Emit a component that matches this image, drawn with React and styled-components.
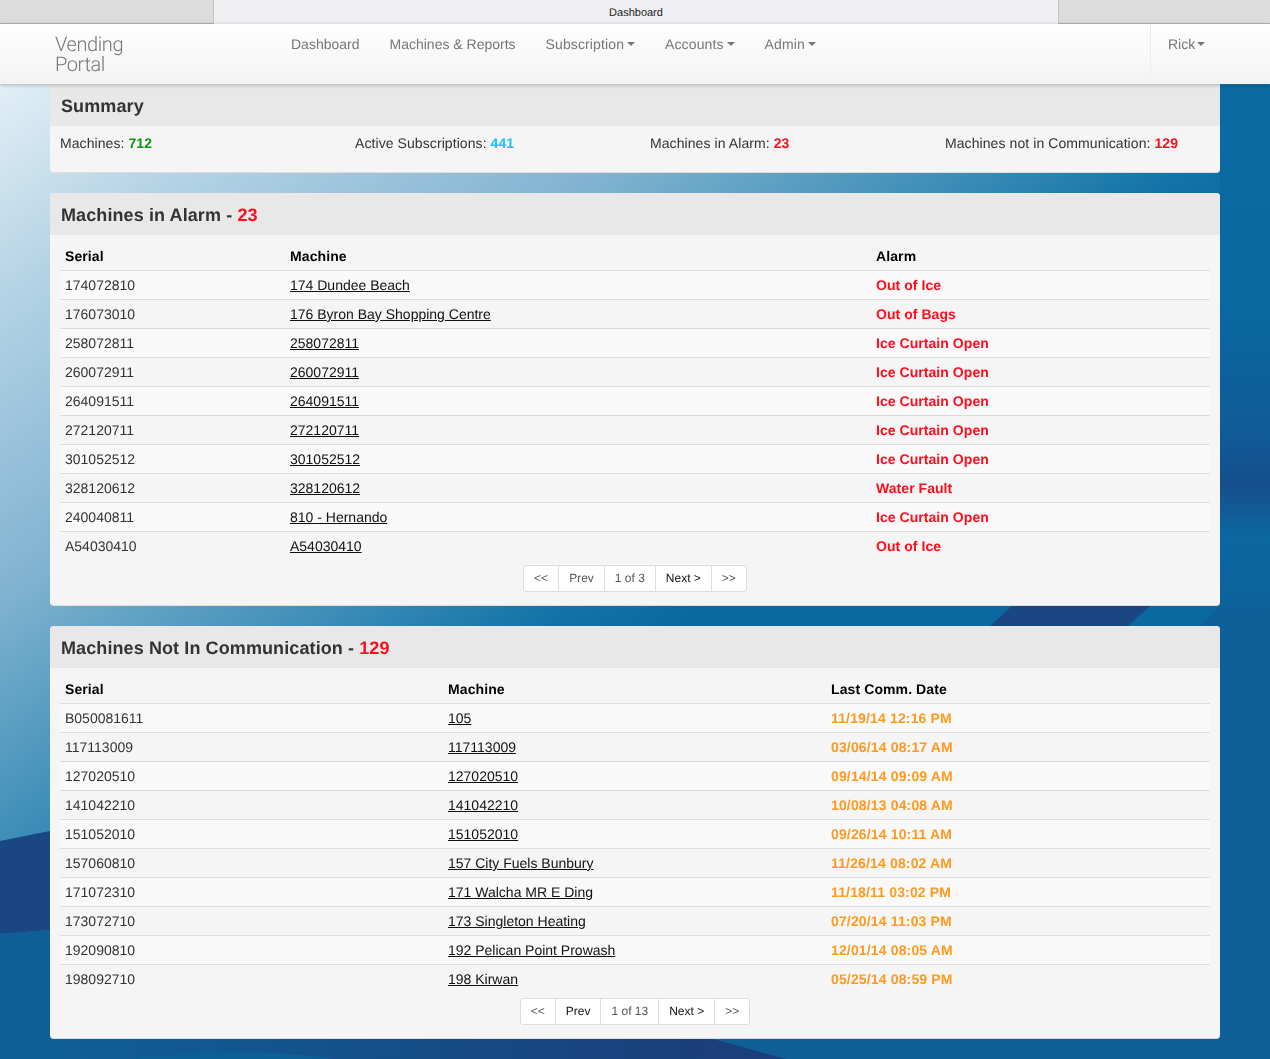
import styled, { createGlobalStyle } from 'styled-components';

const alarms = [
  ['174072810', '174 Dundee Beach', 'Out of Ice'],
  ['176073010', '176 Byron Bay Shopping Centre', 'Out of Bags'],
  ['258072811', '258072811', 'Ice Curtain Open'],
  ['260072911', '260072911', 'Ice Curtain Open'],
  ['264091511', '264091511', 'Ice Curtain Open'],
  ['272120711', '272120711', 'Ice Curtain Open'],
  ['301052512', '301052512', 'Ice Curtain Open'],
  ['328120612', '328120612', 'Water Fault'],
  ['240040811', '810 - Hernando', 'Ice Curtain Open'],
  ['A54030410', 'A54030410', 'Out of Ice'],
];

const offline = [
  ['B050081611', '105', '11/19/14 12:16 PM'],
  ['117113009', '117113009', '03/06/14 08:17 AM'],
  ['127020510', '127020510', '09/14/14 09:09 AM'],
  ['141042210', '141042210', '10/08/13 04:08 AM'],
  ['151052010', '151052010', '09/26/14 10:11 AM'],
  ['157060810', '157 City Fuels Bunbury', '11/26/14 08:02 AM'],
  ['171072310', '171 Walcha MR E Ding', '11/18/11 03:02 PM'],
  ['173072710', '173 Singleton Heating', '07/20/14 11:03 PM'],
  ['192090810', '192 Pelican Point Prowash', '12/01/14 08:05 AM'],
  ['198092710', '198 Kirwan', '05/25/14 08:59 PM'],
];

const GlobalStyle = createGlobalStyle`
  html, body {
    margin: 0;
    padding: 0;
  }

  body {
    font-family: "Liberation Sans", Arial, sans-serif;
    font-size: 14px;
    line-height: 20px;
    color: #333;
    background: #0f5f98;
    text-rendering: geometricPrecision;
  }
`;

const BackdropSvg = styled.svg`
  position: fixed;
  top: 0;
  left: 0;
  width: 1270px;
  height: 1059px;
  z-index: -1;
`;

const TabBar = styled.div`
  display: grid;
  grid-template-columns: 213px 1fr 211px;
  height: 23px;
  background: #dcdcdc;
  border-top: 1px solid #cfcfcf;
  border-bottom: 1px solid #b4b4b4;
  box-sizing: content-box;
  margin-top: -1px;
`;

const ActiveTab = styled.div`
  grid-column: 2;
  background: #f0f0f2;
  border-left: 1px solid #c4c4c4;
  border-right: 1px solid #c4c4c4;
  font-size: 11px;
  line-height: 27px;
  text-align: center;
  color: #222;
`;

const NavBar = styled.header`
  position: relative;
  z-index: 2;
  display: flex;
  height: 60px;
  background: linear-gradient(180deg, #ffffff 0%, #f3f3f3 100%);
  box-shadow: 0 1px 4px rgba(0, 0, 0, 0.25);
`;

const Brand = styled.div`
  width: 276px;
  padding: 10px 0 0 55px;
  box-sizing: border-box;
  font-family: Roboto, "Liberation Sans", sans-serif;
  font-weight: 300;
  font-size: 20px;
  letter-spacing: -0.4px;
  line-height: 20px;
  color: #777;
`;

const NavLinks = styled.nav`
  display: flex;
  align-items: flex-start;
  flex: 1;
`;

const NavLink = styled.span`
  display: flex;
  align-items: center;
  padding: 10px 15px 0;
  color: #777;
`;

const Caret = styled.i`
  display: inline-block;
  margin-left: 2px;
  border-top: 4px solid #777;
  border-left: 4px solid transparent;
  border-right: 4px solid transparent;
`;

const MenuLink = styled(NavLink)`
  letter-spacing: 0.12px;

  ${Caret} {
    margin-left: 3px;
  }
`;

const UserMenu = styled.div`
  display: flex;
  align-items: flex-start;
  width: 120px;
  height: 52px;
  padding-left: 2px;
  box-sizing: border-box;
  border-left: 1px solid #ececec;
`;

const Main = styled.main`
  display: flex;
  flex-direction: column;
  gap: 20px;
  padding: 0 50px 20px;
`;

const Panel = styled.section`
  background: #f5f5f5;
  border-bottom: 1px solid #ddd;
  border-radius: ${(p) => (p.$flush ? '0 0 4px 4px' : '4px')};
  overflow: hidden;
`;

const PanelHeading = styled.h2`
  margin: 0;
  height: 42px;
  padding: 0 11px;
  background: #e8e8e8;
  font-size: 18px;
  font-weight: bold;
  letter-spacing: 0.1px;
  line-height: 44px;
  color: #333;
`;

const SummaryGrid = styled.div`
  display: grid;
  grid-template-columns: repeat(4, 295px);
  height: 46px;
  padding: 7px 10px 0;
  box-sizing: border-box;
  letter-spacing: 0.08px;
`;

const Stat = styled.b`
  color: ${(p) => p.$color};
`;

const PanelBody = styled.div`
  padding: 7px 10px 13px;
`;

const Table = styled.table`
  width: 1150px;
  table-layout: fixed;
  border-collapse: collapse;
`;

const Th = styled.th`
  box-sizing: border-box;
  padding: 4px 5px;
  width: ${(p) => p.$width}px;
  border-bottom: 1px solid #ddd;
  text-align: left;
  font-weight: bold;
  letter-spacing: 0.1px;
  color: #000;
`;

const Row = styled.tr`
  &:nth-child(odd) {
    background: #f9f9f9;
  }
`;

const Td = styled.td`
  padding: 4px 5px;
  border-top: 1px solid #ddd;
  color: #333;
`;

const MachineLink = styled.a`
  color: #111;
  text-decoration: underline;
`;

const StatusCell = styled(Td)`
  font-weight: bold;
  letter-spacing: ${(p) => p.$spacing};
  color: ${(p) => p.$color};
`;

const Pager = styled.div`
  display: flex;
  justify-content: center;
  margin-top: 5px;
`;

const PagerGroup = styled.div`
  display: flex;
  height: 25px;
  background: #fff;
  border: 1px solid #ddd;
  border-radius: 3px;
`;

const PagerItem = styled.span`
  padding: 0 10px;
  font-size: 12px;
  line-height: 24px;
  color: ${(p) => (p.$dim ? '#555' : '#111')};
  & + & {
    border-left: 1px solid #ddd;
  }
`;

const Backdrop = () => (
  <BackdropSvg viewBox="0 0 1270 1059">
    <defs>
      <linearGradient id="sky" gradientUnits="userSpaceOnUse" x1="0" y1="85" x2="477" y2="766">
        <stop offset="0" stopColor="#e2eff6" />
        <stop offset="0.21" stopColor="#b5d3e5" />
        <stop offset="0.51" stopColor="#7fb2d0" />
        <stop offset="0.74" stopColor="#3f8fb8" />
        <stop offset="0.9" stopColor="#1473a8" />
        <stop offset="1" stopColor="#0a69a1" />
      </linearGradient>
      <linearGradient id="edge" x1="0" y1="0" x2="0" y2="1">
        <stop offset="0" stopColor="#0a6aa1" />
        <stop offset="0.22" stopColor="#0a69a1" />
        <stop offset="0.36" stopColor="#105a98" />
        <stop offset="0.41" stopColor="#164e8c" />
        <stop offset="0.46" stopColor="#0c66a0" />
        <stop offset="0.51" stopColor="#0d649e" />
        <stop offset="0.55" stopColor="#0f5f98" />
        <stop offset="1" stopColor="#0f5f98" />
      </linearGradient>
      <linearGradient id="deep" gradientUnits="userSpaceOnUse" x1="50" y1="0" x2="700" y2="0">
        <stop offset="0" stopColor="#1a3f7a" stopOpacity="0" />
        <stop offset="1" stopColor="#1a3f7a" />
      </linearGradient>
    </defs>
    <rect width="1270" height="1059" fill="url(#sky)" />
    <path d="M0 934 L700 880 L1200 626 L1220 606 L1270 560 V1059 H0 Z" fill="#0f5f98" />
    <path d="M0 841 L50 831 L700 780 L990 626 L1012 606 L1270 430 V490 L1150 606 L1128 626 L700 860 L50 930 L0 934 Z" fill="#1a4682" />
    <path d="M50 1059 V1000 H680 L713 1039 L786 1059 Z" fill="url(#deep)" />
    <ellipse cx="235" cy="1080" rx="150" ry="28" fill="#0d5f98" />
    <rect x="1220" y="85" width="50" height="974" fill="url(#edge)" />
  </BackdropSvg>
);

const DataTable = ({ headers, widths, rows, statusColor, statusSpacing }) => (
  <Table>
    <thead>
      <tr>
        {headers.map((h, i) => (
          <Th key={h} $width={widths[i]}>{h}</Th>
        ))}
      </tr>
    </thead>
    <tbody>
      {rows.map(([serial, name, status]) => (
        <Row key={serial}>
          <Td>{serial}</Td>
          <Td><MachineLink>{name}</MachineLink></Td>
          <StatusCell $color={statusColor} $spacing={statusSpacing}>{status}</StatusCell>
        </Row>
      ))}
    </tbody>
  </Table>
);

const Pagination = ({ label, prevDim }) => (
  <Pager>
    <PagerGroup>
      <PagerItem $dim>&lt;&lt;</PagerItem>
      <PagerItem $dim={prevDim}>Prev</PagerItem>
      <PagerItem $dim>{label}</PagerItem>
      <PagerItem>Next &gt;</PagerItem>
      <PagerItem $dim>&gt;&gt;</PagerItem>
    </PagerGroup>
  </Pager>
);

const App = () => {
  return (
    <>
      <GlobalStyle />
      <Backdrop />
      <TabBar>
        <ActiveTab>Dashboard</ActiveTab>
      </TabBar>
      <NavBar>
        <Brand>Vending<br />Portal</Brand>
        <NavLinks>
          <NavLink>Dashboard</NavLink>
          <NavLink>Machines &amp; Reports</NavLink>
          <MenuLink>Subscription<Caret /></MenuLink>
          <MenuLink>Accounts<Caret /></MenuLink>
          <MenuLink>Admin<Caret /></MenuLink>
        </NavLinks>
        <UserMenu>
          <NavLink>Rick<Caret /></NavLink>
        </UserMenu>
      </NavBar>
      <Main>
        <Panel $flush>
          <PanelHeading>Summary</PanelHeading>
          <SummaryGrid>
            <div>Machines: <Stat $color="#0a9a12">712</Stat></div>
            <div>Active Subscriptions: <Stat $color="#1cc0ff">441</Stat></div>
            <div>Machines in Alarm: <Stat $color="#ff0d1d">23</Stat></div>
            <div>Machines not in Communication: <Stat $color="#ff0d1d">129</Stat></div>
          </SummaryGrid>
        </Panel>
        <Panel>
          <PanelHeading>Machines in Alarm - <Stat $color="#ff0d1d">23</Stat></PanelHeading>
          <PanelBody>
            <DataTable
              headers={['Serial', 'Machine', 'Alarm']}
              widths={[225, 586, 339]}
              rows={alarms}
              statusColor="#ff0d1d"
              statusSpacing="0.05px"
            />
            <Pagination label="1 of 3" prevDim />
          </PanelBody>
        </Panel>
        <Panel>
          <PanelHeading>Machines Not In Communication - <Stat $color="#ff0d1d">129</Stat></PanelHeading>
          <PanelBody>
            <DataTable
              headers={['Serial', 'Machine', 'Last Comm. Date']}
              widths={[383, 383, 384]}
              rows={offline}
              statusColor="#ff9a1e"
              statusSpacing="0.15px"
            />
            <Pagination label="1 of 13" />
          </PanelBody>
        </Panel>
      </Main>
    </>
  );
};

export default App;
